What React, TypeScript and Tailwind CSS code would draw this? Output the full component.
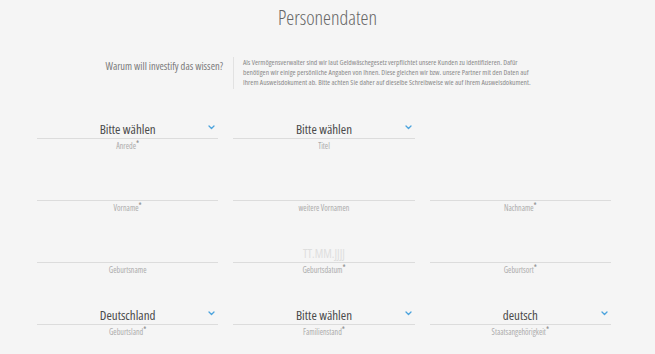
import React from 'react';

function Chevron() {
    return (
        <svg className="absolute right-[3px] top-[7px] h-[5px] w-[7px] text-[#4ba3dd]" viewBox="0 0 7 5" fill="none" stroke="currentColor">
            <path strokeWidth={1.3} strokeLinecap="round" strokeLinejoin="round" d="M1 1l2.5 2.5L6 1" />
        </svg>
    );
}

function Field({ label, required, value, select, placeholder }: { label: string; required?: boolean; value?: string; select?: boolean; placeholder?: string }) {
    return (
        <div className="flex flex-col">
            <div className="relative h-[21px] border-b border-[#dcdcdc] text-center leading-[20px]">
                {value && <span className="text-[13px] text-[#4a4a4a] [font-stretch:87.5%]">{value}</span>}
                {placeholder && <span className="text-[12px] text-[#dedede] [font-stretch:75%]">{placeholder}</span>}
                {select && <Chevron />}
            </div>
            <div className="mt-[1px] text-center text-[8px] leading-[12px] text-[#ababab] [font-stretch:87.5%]">
                {label}
                {required && <span className="relative -top-[2px] text-[#888]">*</span>}
            </div>
        </div>
    );
}

export default function App() {
    return (
        <div className="min-h-[354px] w-full bg-[#f5f5f5] font-['Open_Sans',sans-serif]">
            <h1 className="pt-[6px] text-center text-[20px] font-light leading-[24px] text-[#666] [font-stretch:75%]">
                Personendaten
            </h1>

            <div className="mt-[27px] flex">
                <div className="w-[223px] pt-[2px] text-right text-[10.5px] leading-[14px] text-[#7a7a7a] [font-stretch:75%]">
                    Warum will investify das wissen?
                </div>
                <div className="ml-[10px] h-[32px] border-l border-[#e2e2e2]" />
                <div className="ml-[9px] whitespace-nowrap text-[7.5px] leading-[10px] text-[#8a8a8a] [font-stretch:75%]">
                    <div>Als Vermögensverwalter sind wir laut Geldwäschegesetz verpflichtet unsere Kunden zu identifizieren. Dafür</div>
                    <div>benötigen wir einige persönliche Angaben von Ihnen. Diese gleichen wir bzw. unsere Partner mit den Daten auf</div>
                    <div>Ihrem Ausweisdokument ab. Bitte achten Sie daher auf dieselbe Schreibweise wie auf Ihrem Ausweisdokument.</div>
                </div>
            </div>

            <div className="ml-[37px] mt-[29px] grid w-[574px] grid-cols-3 gap-x-[15px] gap-y-[28px]">
                <Field label="Anrede" required value="Bitte wählen" select />
                <Field label="Titel" value="Bitte wählen" select />
                <div />

                <Field label="Vorname" required />
                <Field label="weitere Vornamen" />
                <Field label="Nachname" required />

                <Field label="Geburtsname" />
                <Field label="Geburtsdatum" required placeholder="TT.MM.JJJJ" />
                <Field label="Geburtsort" required />

                <Field label="Geburtsland" required value="Deutschland" select />
                <Field label="Familienstand" required value="Bitte wählen" select />
                <Field label="Staatsangehörigkeit" required value="deutsch" select />
            </div>
        </div>
    );
}
